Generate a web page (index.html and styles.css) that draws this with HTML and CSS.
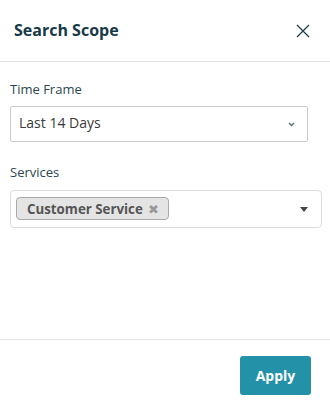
FILE: index.html
```html
<!DOCTYPE html>
<html>
<head>
<meta charset="utf-8">
<link rel="stylesheet" href="styles.css">
</head>
<body>
<div class="panel">
  <div class="header">
    <h1 class="title">Search Scope</h1>
    <button class="close" aria-label="Close">
      <svg width="14" height="14" viewBox="0 0 14 14"><path d="M1 1 L13 13 M13 1 L1 13" stroke="#173a48" stroke-width="1.2" fill="none"/></svg>
    </button>
  </div>
  <div class="content">
    <div class="field">
      <label class="label">Time Frame</label>
      <div class="select">
        <span class="select-text">Last 14 Days</span>
        <svg class="chev" width="7" height="5" viewBox="0 0 7 5"><path d="M1 1 L3.5 3.5 L6 1" stroke="#5a6e75" stroke-width="1.4" fill="none"/></svg>
      </div>
    </div>
    <div class="field field-services">
      <label class="label">Services</label>
      <div class="multi">
        <span class="tag">Customer Service <span class="tag-x">✖</span></span>
        <span class="caret"></span>
      </div>
    </div>
  </div>
  <div class="footer">
    <button class="apply">Apply</button>
  </div>
</div>
</body>
</html>
```
FILE: styles.css
```css
* { box-sizing: border-box; }
html, body { margin: 0; padding: 0; background: #fff; }
body { font-family: "Open Sans", "Liberation Sans", sans-serif; }
.panel { width: 330px; height: 410px; display: flex; flex-direction: column; }
.header {
  height: 62px;
  border-bottom: 1px solid #e3e3e3;
  display: flex;
  align-items: center;
  justify-content: space-between;
  padding: 0 20px 0 14px;
}
.title { margin: 0; font-size: 16px; font-weight: 700; color: #173a48; line-height: 22px; padding-bottom: 2px; }
.close { border: 0; background: none; padding: 0; width: 14px; height: 14px; display: flex; }
.content { flex: 1; padding: 18px 8px 0 10px; }
.field { display: flex; flex-direction: column; }
.field-services { margin-top: 21px; }
.label { font-size: 13px; line-height: 18px; color: #2a4650; margin-bottom: 8px; }
.field-services .label { margin-bottom: 9px; }
.select {
  width: 298px; height: 36px;
  border: 1px solid #c9c9d2; border-radius: 2px;
  display: flex; align-items: center; justify-content: space-between;
  padding: 0 12px 0 8px;
}
.select-text { font-size: 14px; color: #3a3a3a; line-height: 20px; margin-top: -2px; }
.chev { display: block; }
.multi {
  width: 312px; height: 38px;
  border: 1px solid #dcdcdc; border-radius: 4px;
  display: flex; align-items: center; justify-content: space-between;
  padding: 0 13px 0 5px;
}
.tag {
  height: 23px;
  background: #e4e4e4; border: 1px solid #aaa; border-radius: 4px;
  padding: 0 9px 0 10px;
  font-size: 13.3px; font-weight: 700; color: #555;
  display: flex; align-items: center; line-height: 18px;
  margin-top: -1px;
}
.tag-x { color: #999; font-size: 13px; font-weight: 400; margin-left: 5px; }
.caret { width: 0; height: 0; border-left: 4px solid transparent; border-right: 4px solid transparent; border-top: 5px solid #444; }
.footer {
  height: 71px;
  border-top: 1px solid #e3e3e3;
  display: flex; justify-content: flex-end; align-items: flex-start;
  padding: 16px 19px 0 0;
}
.apply {
  width: 71px; height: 39px;
  background: #2391a8; color: #fff; border: 0; border-radius: 3px;
  font-family: "Open Sans", "Liberation Sans", sans-serif;
  font-size: 14px; font-weight: 700; padding: 0 0 1px;
}
```
